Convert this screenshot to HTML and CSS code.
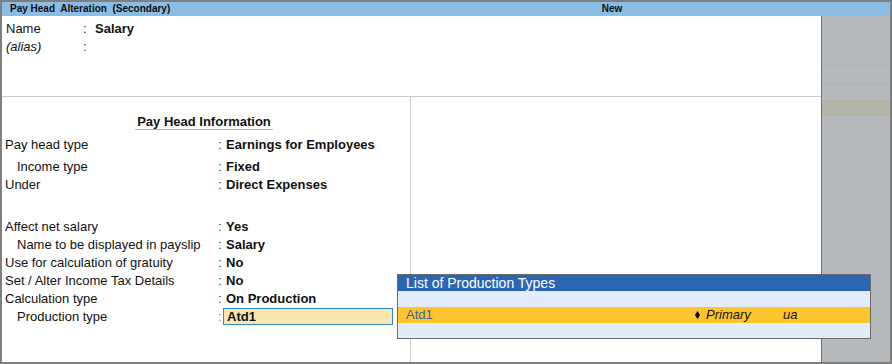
FILE: index.html
```html
<!DOCTYPE html>
<html>
<head>
<meta charset="utf-8">
<link rel="stylesheet" href="styles.css">
</head>
<body>
<div class="window">
  <div class="titlebar">
    <div class="tb-left">Pay Head&nbsp; Alteration&nbsp; (Secondary)</div>
    <div class="tb-mid">New</div>
    <div class="tb-right"></div>
  </div>
  <div class="content">
    <div class="main">
      <div class="top">
        <div class="nrow"><span class="nlabel">Name</span><span class="ncolon">:</span><span class="nvalue">Salary</span></div>
        <div class="nrow"><span class="nlabel alias">(alias)</span><span class="ncolon">:</span></div>
      </div>
      <div class="bottom">
        <div class="left">
          <div class="section-title"><span>Pay Head Information</span></div>
          <div class="row"><span class="lbl">Pay head type</span><span class="colon">:</span><span class="val">Earnings for Employees</span></div>
          <div class="row indent gap-sm"><span class="lbl">Income type</span><span class="colon">:</span><span class="val">Fixed</span></div>
          <div class="row"><span class="lbl">Under</span><span class="colon">:</span><span class="val">Direct Expenses</span></div>
          <div class="row gap-lg"><span class="lbl">Affect net salary</span><span class="colon">:</span><span class="val">Yes</span></div>
          <div class="row indent"><span class="lbl">Name to be displayed in payslip</span><span class="colon">:</span><span class="val">Salary</span></div>
          <div class="row"><span class="lbl">Use for calculation of gratuity</span><span class="colon">:</span><span class="val">No</span></div>
          <div class="row"><span class="lbl">Set / Alter Income Tax Details</span><span class="colon">:</span><span class="val">No</span></div>
          <div class="row"><span class="lbl">Calculation type</span><span class="colon">:</span><span class="val">On Production</span></div>
          <div class="row indent"><span class="lbl">Production type</span><span class="colon active">:</span><span class="val input">Atd1</span></div>
        </div>
        <div class="right"></div>
      </div>
    </div>
    <div class="side">
      <div class="sline s1"></div>
      <div class="sline s2"></div>
      <div class="sband"></div>
    </div>
  </div>
  <div class="popup">
    <div class="popup-head">List of Production Types</div>
    <div class="prow blank"></div>
    <div class="prow selected">
      <span class="pname">Atd1</span>
      <span class="pgroup"><svg class="diamond" width="5" height="8" viewBox="0 0 5 8"><polygon points="2.5,0 5,4 2.5,8 0,4" fill="#000"/></svg><em>Primary</em></span>
      <span class="pextra"><em>ua</em></span>
    </div>
    <div class="prow blank last"></div>
  </div>
</div>
</body>
</html>
```

FILE: styles.css
```css
* { box-sizing: border-box; }
html, body { margin: 0; padding: 0; background: #ffffff; }
body {
  font-family: "Liberation Sans", Arial, sans-serif;
  font-size: 13px;
  color: #111;
}
.window {
  position: relative;
  width: 892px;
  height: 364px;
  border: 2px solid #7f7f7f;
  background: #fff;
  display: flex;
  flex-direction: column;
}
.titlebar {
  height: 14px;
  background: #89bde6;
  display: grid;
  grid-template-columns: 408px 404px 1fr;
  font-size: 10px;
  font-weight: bold;
  line-height: 14px;
  color: #0d0d0d;
}
.tb-left { padding-left: 8px; white-space: pre; }
.tb-mid { text-align: center; }
.content {
  flex: 1;
  display: flex;
}
.main {
  width: 819px;
  display: flex;
  flex-direction: column;
}
.top {
  height: 81px;
  border-bottom: 1px solid #c8c8c8;
  padding: 4px 0 0 4px;
}
.nrow {
  display: flex;
  line-height: 18px;
  height: 18px;
}
.nlabel { width: 77px; }
.alias { font-style: italic; }
.ncolon { width: 12px; color: #333; }
.nvalue { font-weight: bold; }
.bottom {
  flex: 1;
  display: flex;
}
.left {
  width: 409px;
  border-right: 1px solid #c8c8c8;
  display: flex;
  flex-direction: column;
}
.right { flex: 1; }
.section-title {
  padding-top: 17px;
  padding-right: 4px;
  text-align: center;
  margin-bottom: 6px;
}
.section-title span {
  display: inline-block;
  font-weight: bold;
  line-height: 14px;
  padding: 0 2px;
  border-bottom: 1px solid #b4b4b4;
}
.row {
  display: flex;
  align-items: center;
  height: 18px;
  line-height: 18px;
  padding-left: 3px;
}
.gap-sm { margin-top: 4px; }
.gap-lg { margin-top: 24px; }
.lbl { width: 213px; }
.indent .lbl { padding-left: 12px; }
.colon { width: 8px; color: #333; }
.colon.active { width: 5px; color: #c0782f; }
.val { font-weight: bold; }
.val.input {
  width: 170px;
  height: 17px;
  line-height: 15px;
  border: 1px solid #2b8ad0;
  background: #fde7b1;
  padding-left: 3px;
  margin-top: -1px;
}
.side {
  width: 69px;
  border-left: 1px solid #6f6f6f;
  background: #b6babd;
  display: flex;
  flex-direction: column;
}
.sline { height: 1px; background: #b0b3b5; }
.s1 { margin-top: 49px; }
.s2 { margin-top: 17px; }
.sband { margin-top: 16px; height: 16px; background: #b4b5a9; }
.popup {
  position: absolute;
  left: 395px;
  top: 272px;
  width: 474px;
  height: 65px;
  border: 1px solid #6a6a6a;
  background: #e1eefa;
  display: flex;
  flex-direction: column;
}
.popup-head {
  height: 16px;
  line-height: 16px;
  font-size: 14px;
  background: #2b66b2;
  color: #fff;
  padding-left: 8px;
}
.prow {
  height: 16px;
  line-height: 16px;
  display: grid;
  grid-template-columns: 297px 88px 1fr;
}
.prow.last { height: 15px; }
.prow.selected { background: #fec42d; }
.pname { padding-left: 8px; color: #3b62ae; }
.pgroup { display: flex; align-items: center; color: #111; }
.pgroup em { font-style: italic; margin-left: 6px; }
.diamond { display: block; margin-top: -1px; }
.pextra em { font-style: italic; color: #111; }
```
